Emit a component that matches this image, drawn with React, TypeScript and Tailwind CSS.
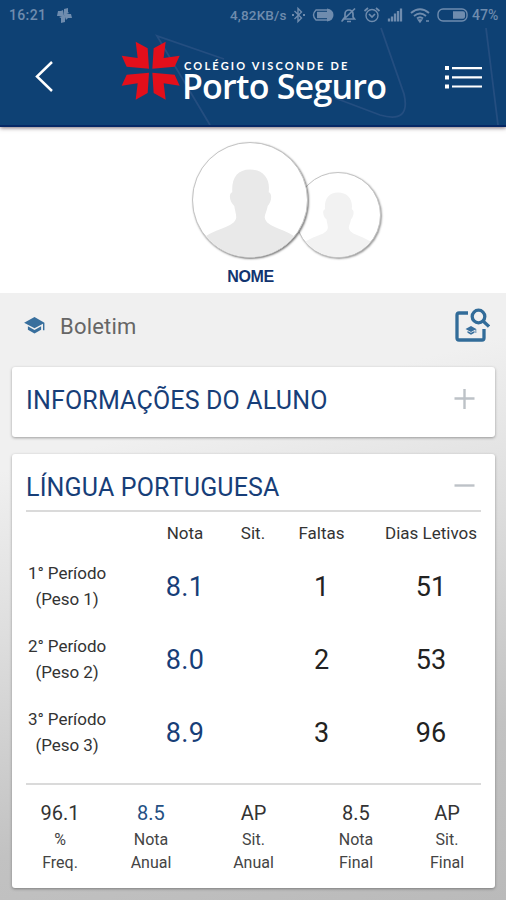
/**
 * Boletim Screen
 *
 * Student report card with the school header and grades by subject.
 */

import { Fragment, type ReactNode } from 'react';

interface Period {
  name: string;
  weight: string;
  grade: string;
  absences: string;
  days: string;
}

interface Summary {
  value: string;
  lines: [string, string];
  highlight?: boolean;
}

const PERIODS: Period[] = [
  { name: '1° Período', weight: '(Peso 1)', grade: '8.1', absences: '1', days: '51' },
  { name: '2° Período', weight: '(Peso 2)', grade: '8.0', absences: '2', days: '53' },
  { name: '3° Período', weight: '(Peso 3)', grade: '8.9', absences: '3', days: '96' },
];

const SUMMARY: Summary[] = [
  { value: '96.1', lines: ['%', 'Freq.'] },
  { value: '8.5', lines: ['Nota', 'Anual'], highlight: true },
  { value: 'AP', lines: ['Sit.', 'Anual'] },
  { value: '8.5', lines: ['Nota', 'Final'] },
  { value: 'AP', lines: ['Sit.', 'Final'] },
];

function StatusIcons() {
  return (
    <svg width="178" height="20" viewBox="0 0 178 20" fill="none" stroke="currentColor" strokeWidth="1.4">
      {/* bluetooth */}
      <path d="M2.500 6l7 7-3.500 3.500v-13L9.500 7l-7 7" />
      <path d="M0 10h2M11 10h2" strokeWidth="2" />
      {/* vibrating battery */}
      <path d="M37 5H24q-5 5 0 10h13" />
      <rect x="25" y="6.800" width="10" height="6.400" fill="currentColor" stroke="none" />
      <path d="M35 3.500q6.500 1 6.500 6.500T35 16.500z" fill="currentColor" stroke="none" />
      {/* muted bell */}
      <path d="M51.500 14h11l-1.500-2V9a4 4 0 0 0-8 0v3zM55 16.500h4M49.500 16.500L63 3.500" strokeWidth="1.700" />
      {/* alarm */}
      <circle cx="80" cy="10.500" r="6" />
      <path d="M77 9l3 3 3-3M72.500 6l3.500-3M87.500 6l-3.500-3" strokeWidth="1.700" />
      {/* signal */}
      <path d="M97 16.500v-3M100 16.500v-5M103 16.500v-8M106 16.500V6M109 16.500V3.500" strokeWidth="2.300" />
      {/* wifi */}
      <path d="M119 8q9-7.500 18 0M122 11q6-5 12 0M125 13.500q3-2.500 6 0" strokeWidth="2" />
      <path d="M128 17l-1.500-2h3zM134 16h3" fill="currentColor" />
      {/* battery */}
      <rect x="146" y="4" width="29" height="12" rx="5" />
      <path d="M161 6.200h10a2 2 0 0 1 2 2v3.600a2 2 0 0 1-2 2h-10z" fill="currentColor" stroke="none" />
    </svg>
  );
}

function StatusBar() {
  return (
    <div className="flex h-[30px] items-center pl-[9px] text-[14px] font-medium text-[#6f8cae]">
      <span className="w-[48px] tracking-[0.350px]">16:21</span>
      <svg width="15" height="16" viewBox="0 0 15 16" fill="currentColor">
        <path d="M7 8V2l4-1v4l1 1zM7 7h7l1 4h-4l-2 2zM8 8v7l-4 1v-5l-2-1zM7 9H0l1-5h3l2-1z" />
      </svg>
      <span className="ml-[158px] w-[62px] text-[13.500px] tracking-[0.150px] whitespace-nowrap">4,82KB/s</span>
      <StatusIcons />
      <span className="ml-[2px] text-[14px]">47%</span>
    </div>
  );
}

const STAR_ARM = 'M77 18L113 38L117 99L50 93L35 60L83 67Z';

function Logo() {
  return (
    <div className="flex">
      <svg width="61" height="61" viewBox="30 13 183 183" fill="#e30f1b">
        <path d={STAR_ARM} />
        <path d={STAR_ARM} transform="matrix(-1 0 0 1 244 0)" />
        <path d={STAR_ARM} transform="matrix(1 0 0 -1 0 210)" />
        <path d={STAR_ARM} transform="matrix(-1 0 0 -1 244 210)" />
      </svg>
      <div className="ml-[3px] w-[206px] pt-[20px] whitespace-nowrap text-white">
        <div className="font-['Lato',sans-serif] text-[11px] leading-[11px] font-bold tracking-[2.200px]">
          COLÉGIO VISCONDE DE
        </div>
        <div className="-ml-[2px] font-['Open_Sans',sans-serif] text-[34px] leading-[30px] font-semibold tracking-[-0.780px]">
          Porto Seguro
        </div>
      </div>
    </div>
  );
}

function Header() {
  return (
    <header className="relative z-10 h-[127px] border-b-2 border-[#062865] bg-[#0e4174] shadow-[0_1px_4px_rgba(70,50,60,0.7)]">
      <svg className="absolute inset-0" width="506" height="125" fill="none" stroke="#244e80" strokeWidth="1.800">
        <path d="M210 125L157 36L224 59M335 98L380 115Q411 124 404 94L381 28M486 28L498 125" />
      </svg>
      <div className="relative">
        <StatusBar />
        <div className="flex items-start">
          <svg className="mt-[30px] ml-[34px]" width="20" height="34" fill="none" stroke="white" strokeWidth="2.500">
            <path d="M18 2L3 16.500L18 31" />
          </svg>
          <div className="mt-[9.500px] ml-[66px]">
            <Logo />
          </div>
          <svg className="mt-[34px] ml-[55px]" width="38" height="28" fill="white">
            <path d="M0 2h4v4H0zM0 11.500h4v4H0zM0 20.500h4v4H0zM7 3h30v2.200H7zM7 12.300h30v2.200H7zM7 21.400h30v2.200H7z" />
          </svg>
        </div>
      </div>
    </header>
  );
}

function Avatar({ className, fill }: { className: string; fill: string }) {
  return (
    <div className={`overflow-hidden rounded-full border border-[#c4c4c4] bg-white ${className}`}>
      <svg width="100%" height="100%" viewBox="0 0 116 116" fill={fill}>
        <path d="M58 27C45 27 39 36 40 50C36 51 37 60 42 64C43 70 44 72 44 76C42 86 24 86 10 97L2 104V116H114V104L106 97C92 86 75 86 73 76C73 72 75 70 76 64C80 60 81 51 77 50C79 36 71 27 58 27Z" />
      </svg>
    </div>
  );
}

function Profile() {
  return (
    <section className="h-[166px] bg-white pt-[15px]">
      <div className="flex items-end pl-[192px]">
        <Avatar className="relative z-[1] size-[116px] shadow-[1px_1px_2px_rgba(0,0,0,0.5)]" fill="#e9e9e9" />
        <Avatar className="-ml-[13px] size-[86px] shadow-[1px_1px_2px_rgba(0,0,0,0.4)]" fill="#f2f2f2" />
      </div>
      <div className="mt-[9px] w-[501px] text-center font-['Liberation_Sans',sans-serif] text-[16px] leading-[20px] font-bold tracking-[-0.400px] text-[#12346f]">
        NOME
      </div>
    </section>
  );
}

function Cap({ className }: { className: string }) {
  return (
    <svg className={className} viewBox="0 0 22 18" fill="#386f9d">
      <path d="M11 0L0 6L11 12L20 7.100V14H21.500V6Z" />
      <path d="M4 9.800V13.500L11 17.500L18 13.500V9.800L11 13.700Z" />
    </svg>
  );
}

function PageTitle() {
  return (
    <div className="flex h-[60px] items-center pr-[16px] pl-[24px]">
      <Cap className="h-[17px] w-[21px]" />
      <h1 className="ml-[15px] flex-1 pt-[2px] text-[22px] tracking-[0.200px] text-[#666]">Boletim</h1>
      <div className="relative size-[35px]">
        <svg width="35" height="35" fill="none" stroke="#326c99" strokeWidth="3.300">
          <path d="M13 5H4Q2 5 2 7V30Q2 32 4 32H27Q29 32 29 30V21" />
          <circle cx="23.500" cy="8.500" r="6.300" />
          <path d="M28 13L34 18.500" />
        </svg>
        <Cap className="absolute top-[18px] left-[10px] h-[9px] w-[12px]" />
      </div>
    </div>
  );
}

function Card({ className, children }: { className: string; children: ReactNode }) {
  return (
    <section className={`ml-[12px] w-[483px] rounded-[3px] bg-white px-[14px] shadow-[0_1px_3px_rgba(0,0,0,0.35)] ${className}`}>
      {children}
    </section>
  );
}

function CardTitle({ title, open }: { title: string; open?: boolean }) {
  return (
    <div className="flex items-center justify-between pr-[6px]">
      <h2 className="pt-px text-[25px] leading-[30px] tracking-[0.170px] whitespace-nowrap text-[#173e78]">{title}</h2>
      <svg className="-mt-[2px]" width="21" height="21" stroke="#bdc2c7" strokeWidth="2.400">
        <path d={open ? 'M.5 9.500h20' : 'M.5 9.500h20M10.500 0v20'} />
      </svg>
    </div>
  );
}

function SubjectTable() {
  return (
    <div className="grid grid-cols-[125px_68px_68px_69px_125px] text-center text-[#333]">
      <div className="col-span-5 grid h-[42px] grid-cols-subgrid items-center pt-px text-[17px] whitespace-nowrap">
        <span />
        <span>Nota</span>
        <span>Sit.</span>
        <span>Faltas</span>
        <span className="pl-[25px]">Dias Letivos</span>
      </div>
      {PERIODS.map((period) => (
        <Fragment key={period.name}>
          <div className="h-[73px] w-[82px] pt-[7px] text-[17px] leading-[25.500px] tracking-[-0.050px] whitespace-nowrap">
            {period.name}
            <br />
            {period.weight}
          </div>
          <div className="pt-[17px] text-[27px] leading-[32px] tracking-[0.300px] text-[#173e78]">{period.grade}</div>
          <div />
          <div className="pt-[17px] text-[27px] leading-[32px] text-[#222]">{period.absences}</div>
          <div className="pt-[17px] pl-[25px] text-[27px] leading-[32px] text-[#222]">{period.days}</div>
        </Fragment>
      ))}
    </div>
  );
}

function SubjectSummary() {
  return (
    <div className="mt-[10px] grid grid-cols-[68px_114px_91px_114px_68px] border-t-2 border-[#dadada] pt-[15px] text-center text-[#444]">
      {SUMMARY.map((item, index) => (
        <div key={index} className="text-[16px] leading-[23px]">
          <div className={`mb-[2px] text-[20px] leading-[26px] ${item.highlight ? 'text-[#245083]' : 'text-[#333]'}`}>
            {item.value}
          </div>
          <div>{item.lines[0]}</div>
          <div>{item.lines[1]}</div>
        </div>
      ))}
    </div>
  );
}

export default function App() {
  return (
    <div className="h-[900px] w-[506px] overflow-hidden bg-white font-['Roboto',sans-serif]">
      <Header />
      <Profile />
      <main className="h-[607px] bg-[linear-gradient(165deg,#f0f0f0_0%,#f0f0f0_24%,#dedede_46%,#c2c2c2_76%,#bababa_100%)] pt-[2px]">
        <PageTitle />
        <Card className="mt-[12px] h-[70px] pt-[18px]">
          <CardTitle title="INFORMAÇÕES DO ALUNO" />
        </Card>
        <Card className="mt-[17px] h-[434px] pt-[18px]">
          <CardTitle title="LÍNGUA PORTUGUESA" open />
          <div className="mt-[7px] border-t-2 border-[#dadada]" />
          <SubjectTable />
          <SubjectSummary />
        </Card>
      </main>
    </div>
  );
}
